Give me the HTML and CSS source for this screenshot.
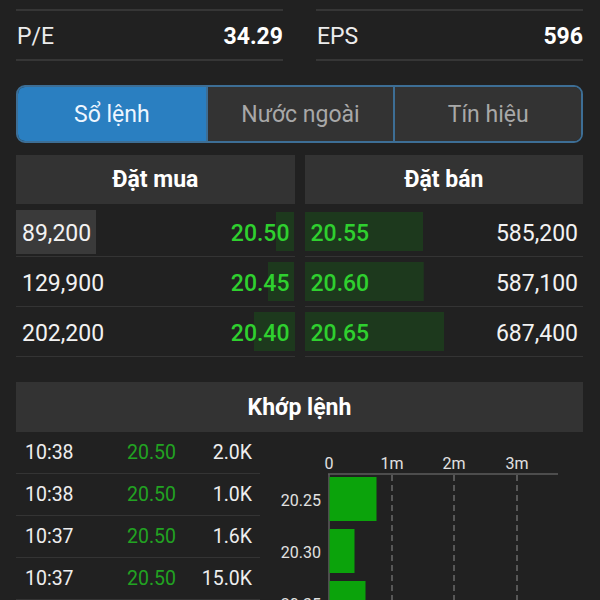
FILE: index.html
```html
<!DOCTYPE html>
<html lang="vi">
<head>
    <meta charset="UTF-8">
    <meta name="viewport" content="width=device-width, initial-scale=1.0">
    <title>Sổ lệnh</title>
    <link rel="stylesheet" href="styles.css">
</head>
<body>
    <div class="page">
        <div class="stats">
            <div class="stat">
                <span class="statLabel">P/E</span>
                <span class="statValue">34.29</span>
            </div>
            <div class="stat">
                <span class="statLabel">EPS</span>
                <span class="statValue">596</span>
            </div>
        </div>

        <div class="tabs">
            <button class="tab active">Sổ lệnh</button>
            <button class="tab">Nước ngoài</button>
            <button class="tab">Tín hiệu</button>
        </div>

        <div class="book">
            <div class="bookSide buy">
                <div class="sectionHead">Đặt mua</div>
                <div class="bookRows">
                    <!-- bar width = volume / max volume * 50% -->
                    <div class="bookRow" style="--w: 6.5%"><span class="qty flash">89,200</span><span class="price">20.50</span></div>
                    <div class="bookRow" style="--w: 9.45%"><span class="qty">129,900</span><span class="price">20.45</span></div>
                    <div class="bookRow" style="--w: 14.7%"><span class="qty">202,200</span><span class="price">20.40</span></div>
                </div>
            </div>
            <div class="bookSide sell">
                <div class="sectionHead">Đặt bán</div>
                <div class="bookRows">
                    <div class="bookRow" style="--w: 42.6%"><span class="price">20.55</span><span class="qty">585,200</span></div>
                    <div class="bookRow" style="--w: 42.7%"><span class="price">20.60</span><span class="qty">587,100</span></div>
                    <div class="bookRow" style="--w: 50%"><span class="price">20.65</span><span class="qty">687,400</span></div>
                </div>
            </div>
        </div>

        <div class="match">
            <div class="sectionHead matchHead">Khớp lệnh</div>
            <div class="matchBody">
                <div class="trades">
                    <div class="trade"><span>10:38</span><span class="tradePrice">20.50</span><span class="tradeVol">2.0K</span></div>
                    <div class="trade"><span>10:38</span><span class="tradePrice">20.50</span><span class="tradeVol">1.0K</span></div>
                    <div class="trade"><span>10:37</span><span class="tradePrice">20.50</span><span class="tradeVol">1.6K</span></div>
                    <div class="trade"><span>10:37</span><span class="tradePrice">20.50</span><span class="tradeVol">15.0K</span></div>
                </div>

                <svg class="chart" width="323" height="220" viewBox="0 0 323 220">
                    <!-- x axis labels -->
                    <text class="axisText" x="69" y="37" text-anchor="middle">0</text>
                    <text class="axisText" x="132" y="37" text-anchor="middle">1m</text>
                    <text class="axisText" x="194" y="37" text-anchor="middle">2m</text>
                    <text class="axisText" x="257" y="37" text-anchor="middle">3m</text>

                    <!-- grid -->
                    <line class="gridLine" x1="132" y1="43" x2="132" y2="220"/>
                    <line class="gridLine" x1="194" y1="43" x2="194" y2="220"/>
                    <line class="gridLine" x1="257" y1="43" x2="257" y2="220"/>
                    <line class="axisLine" x1="68" y1="42" x2="298" y2="42"/>
                    <line class="axisLine" x1="69" y1="42" x2="69" y2="220"/>

                    <!-- bars -->
                    <rect class="bar" x="69.5" y="45" width="47" height="44"/>
                    <rect class="bar" x="69.5" y="97" width="25" height="44"/>
                    <rect class="bar" x="69.5" y="149" width="36" height="44"/>

                    <!-- price labels -->
                    <text class="axisText" x="61" y="74" text-anchor="end">20.25</text>
                    <text class="axisText" x="61" y="126" text-anchor="end">20.30</text>
                    <text class="axisText" x="61" y="178" text-anchor="end">20.35</text>
                </svg>
            </div>
        </div>
    </div>
</body>
</html>
```

FILE: styles.css
```css
* {
    margin: 0;
    padding: 0;
    box-sizing: border-box;
}

body {
    background-color: #212121;
    color: #f2f2f2;
    font-family: Roboto, 'Noto Sans', sans-serif;
    overflow: hidden;
}

.page {
    padding: 9px 17px 0 16px;
}

/* P/E, EPS */
.stats {
    display: grid;
    grid-template-columns: 1fr 1fr;
    gap: 33px;
}

.stat {
    display: flex;
    justify-content: space-between;
    align-items: center;
    height: 52px;
    border-top: 2px solid #363636;
    border-bottom: 2px solid #363636;
    font-size: 23px;
}

.statLabel {
    padding-left: 1px;
    padding-top: 2px;
    color: #ececec;
}

.statValue {
    padding-top: 2px;
    font-weight: bold;
    color: #fff;
}

/* Tabs */
.tabs {
    margin-top: 24px;
    height: 58px;
    display: grid;
    grid-template-columns: 1fr 1fr 1fr;
    border: 2px solid #3d6e95;
    border-radius: 9px;
    overflow: hidden;
}

.tab {
    border: none;
    background-color: #333;
    color: #a8a8a8;
    font-family: inherit;
    font-size: 23px;
}

.tab + .tab {
    border-left: 2px solid #3d6e95;
}

.tab.active {
    background-color: #2a7fc1;
    color: #eef6ff;
}

/* Section headers */
.sectionHead {
    height: 49px;
    display: flex;
    justify-content: center;
    align-items: center;
    background-color: #333;
    font-size: 23px;
    font-weight: bold;
    color: #fff;
}

/* Order book */
.book {
    margin-top: 12px;
    display: grid;
    grid-template-columns: 1fr 1fr;
    gap: 10px;
}

.bookRows {
    padding-top: 3px;
}

.bookRow {
    height: 50px;
    display: flex;
    justify-content: space-between;
    align-items: center;
    padding: 0 5px 0 6px;
    border-bottom: 1px solid #343434;
    font-size: 23px;
    background-image: linear-gradient(#1d391d, #1d391d);
    background-repeat: no-repeat;
    background-size: var(--w) 39px;
}

.bookRow span {
    padding-top: 3px;
}

.buy .bookRow {
    background-position: right center;
}

.sell .bookRow {
    background-position: left center;
}

.qty {
    color: #f2f2f2;
}

.qty.flash {
    margin-left: -6px;
    padding: 3px 5px 0 6px;
    line-height: 41px;
    background-color: #3a3a3a;
}

.price {
    font-weight: 500;
    color: #2fd02f;
}

/* Matched orders */
.match {
    margin-top: 25px;
}

.matchHead {
    height: 50px;
}

.matchBody {
    display: grid;
    grid-template-columns: 244px 1fr;
}

.trade {
    height: 42px;
    display: grid;
    grid-template-columns: 102px 1fr auto;
    align-items: center;
    padding: 0 8px 0 9px;
    border-bottom: 1px solid #343434;
    font-size: 19.5px;
    color: #eee;
}

.tradePrice {
    color: #22a322;
}

.tradeVol {
    text-align: right;
}

.chart {
    display: block;
}

.axisText {
    font-family: Roboto, sans-serif;
    font-size: 16px;
    fill: #e2e2e2;
}

.axisLine {
    stroke: #5c5c5c;
    stroke-width: 1.5;
}

.gridLine {
    stroke: #6a6a6a;
    stroke-width: 1.5;
    stroke-dasharray: 6 4;
}

.bar {
    fill: #0ba30b;
}
```
